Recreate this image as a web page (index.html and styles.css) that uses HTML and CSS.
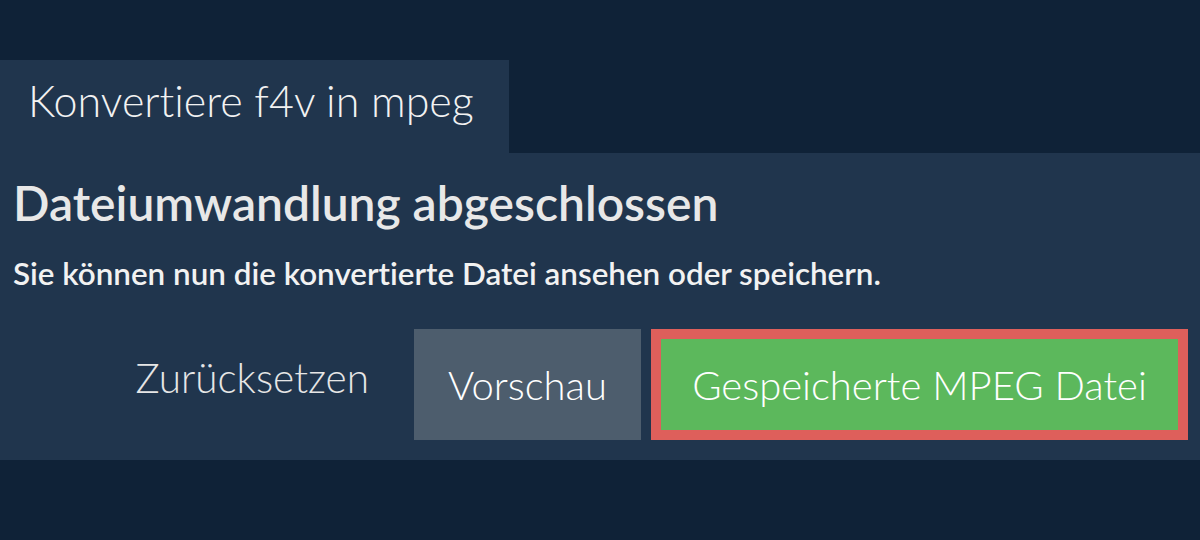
FILE: index.html
```html
<!DOCTYPE html>
<html lang="de">
<head>
<meta charset="utf-8">
<title>Konvertiere f4v in mpeg</title>
<link rel="stylesheet" href="styles.css">
</head>
<body>
<div class="page">
  <div class="tab">Konvertiere f4v in mpeg</div>
  <section class="panel">
    <h1 class="title">Dateiumwandlung abgeschlossen</h1>
    <p class="subtitle">Sie können nun die konvertierte Datei ansehen oder speichern.</p>
    <div class="actions">
      <a class="btn btn-link">Zurücksetzen</a>
      <a class="btn btn-gray">Vorschau</a>
      <a class="btn btn-green">Gespeicherte MPEG Datei</a>
    </div>
  </section>
</div>
</body>
</html>
```
FILE: styles.css
```css
* { box-sizing: border-box; }
html, body {
  margin: 0;
  padding: 0;
  background: #0f2237;
  font-family: Lato, "Open Sans", sans-serif;
  font-variant-ligatures: none;
}
.page {
  padding-top: 60px;
}
.tab {
  display: inline-block;
  background: #20354d;
  color: #f2f2f2;
  font-size: 43px;
  font-weight: 300;
  line-height: 1.2;
  height: 93px;
  padding: 15px 35px 0 28px;
  vertical-align: top;
}
.panel {
  background: #20354d;
  height: 307px;
  padding: 21px 12px 0 13px;
}
.title {
  margin: 0;
  font-size: 48px;
  font-weight: 600;
  color: #e8e8e8;
  line-height: 1.2;
}
.subtitle {
  margin: 23px 0 0;
  font-size: 31.4px;
  font-weight: 600;
  color: #f2f2f2;
  line-height: 1.2;
}
.actions {
  display: flex;
  justify-content: flex-end;
  align-items: center;
  gap: 10px;
  margin-top: 37px;
}
.btn {
  display: flex;
  align-items: center;
  justify-content: center;
  height: 111px;
  font-size: 40px;
  font-weight: 300;
  line-height: 1.2;
  color: #ffffff;
}
.btn-link {
  color: #e6e6e6;
  padding: 0 35px 0 0;
  height: 98px;
  align-self: flex-start;
  font-size: 40.5px;
}
.btn-gray {
  background: #4d5d6d;
  width: 227px;
}
.btn-green {
  background: #5cb85c;
  border: 10px solid #de5f5b;
  width: 537px;
}
```
